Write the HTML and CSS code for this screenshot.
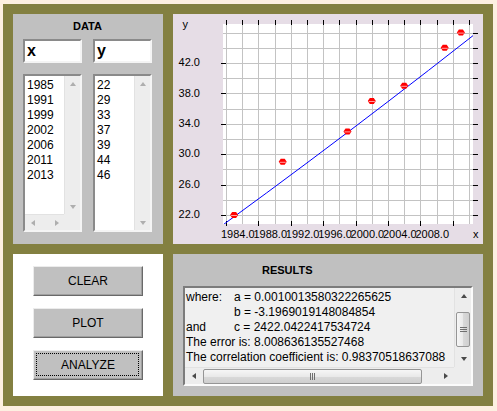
FILE: index.html
```html
<!DOCTYPE html>
<html lang="en">
<head>
    <meta charset="UTF-8">
    <title>Quadratic Regression</title>
    <link rel="stylesheet" href="styles.css">
</head>
<body>
    <div class="frame">
        <!-- Data entry -->
        <section class="panel data">
            <h2 class="data-title">DATA</h2>
            <div class="field">x</div>
            <div class="field">y</div>

            <div class="list list-x">
                <div class="items">
                    <div>1985</div>
                    <div>1991</div>
                    <div>1999</div>
                    <div>2002</div>
                    <div>2006</div>
                    <div>2011</div>
                    <div>2013</div>
                </div>
                <div class="vbar off">
                    <div class="sb-btn"><span class="arrow up"></span></div>
                    <div class="sb-btn"><span class="arrow down"></span></div>
                </div>
                <div class="hbar off">
                    <div class="sb-btn"><span class="arrow left"></span></div>
                    <div class="sb-btn"><span class="arrow right"></span></div>
                </div>
                <div class="corner"></div>
            </div>

            <div class="list list-y">
                <div class="items">
                    <div>22</div>
                    <div>29</div>
                    <div>33</div>
                    <div>37</div>
                    <div>39</div>
                    <div>44</div>
                    <div>46</div>
                </div>
                <div class="vbar off">
                    <div class="sb-btn"><span class="arrow up"></span></div>
                    <div class="sb-btn"><span class="arrow down"></span></div>
                </div>
            </div>
        </section>

        <!-- Plot -->
        <section class="panel plot">
            <svg class="chart" width="310" height="230" viewBox="0 0 310 230">
                <defs>
                    <clipPath id="plot-area"><rect x="50" y="10" width="250" height="200"/></clipPath>
                    <g id="dot">
                        <polygon points="-4,0 -2,-3 2,-3 4,0 2,3 -2,3" fill="#ff0000"/>
                        <path d="M-3 0.5h6" stroke="#ffa0a0" stroke-width="1"/>
                    </g>
                </defs>

                <rect x="50" y="10" width="250" height="200" fill="#ffffff"/>

                <path class="grid" d="M53.5 10V210M69.5 10V210M85.5 10V210M102.5 10V210M118.5 10V210M134.5 10V210M150.5 10V210M166.5 10V210M183.5 10V210M199.5 10V210M215.5 10V210M231.5 10V210M247.5 10V210M264.5 10V210M280.5 10V210M296.5 10V210
                    M50 19.5H300M50 34.5H300M50 49.5H300M50 64.5H300M50 79.5H300M50 95.5H300M50 110.5H300M50 125.5H300M50 140.5H300M50 155.5H300M50 171.5H300M50 186.5H300M50 201.5H300"/>

                <!-- top + right ticks on every grid line, left + bottom on labelled ones -->
                <path class="ticks" d="M53.5 6v5M69.5 6v5M85.5 6v5M102.5 6v5M118.5 6v5M134.5 6v5M150.5 6v5M166.5 6v5M183.5 6v5M199.5 6v5M215.5 6v5M231.5 6v5M247.5 6v5M264.5 6v5M280.5 6v5M296.5 6v5
                    M300 19.5h5M300 34.5h5M300 49.5h5M300 64.5h5M300 79.5h5M300 95.5h5M300 110.5h5M300 125.5h5M300 140.5h5M300 155.5h5M300 171.5h5M300 186.5h5M300 201.5h5
                    M48 49.5h5M48 79.5h5M48 110.5h5M48 140.5h5M48 171.5h5M48 201.5h5
                    M53.5 207v5M85.5 207v5M118.5 207v5M150.5 207v5M183.5 207v5M215.5 207v5M247.5 207v5M280.5 207v5"/>

                <g class="labels" text-anchor="end">
                    <text x="27" y="52">42.0</text>
                    <text x="27" y="82.5">38.0</text>
                    <text x="27" y="113">34.0</text>
                    <text x="27" y="143">30.0</text>
                    <text x="27" y="173.5">26.0</text>
                    <text x="27" y="204">22.0</text>
                </g>
                <g class="labels">
                    <text x="48" y="224">1984.0</text>
                    <text x="80.4" y="224">1988.0</text>
                    <text x="112.8" y="224">1992.0</text>
                    <text x="145.2" y="224">1996.0</text>
                    <text x="177.6" y="224">2000.0</text>
                    <text x="210" y="224">2004.0</text>
                    <text x="242.4" y="224">2008.0</text>
                    <text x="300" y="224">x</text>
                    <text x="9.5" y="13.5">y</text>
                </g>

                <polyline class="fit" clip-path="url(#plot-area)" points="50,210.86 93.5,178.98 134,148.9 174.5,118.44 215,87.6 255.5,56.38 300.05,21.6"/>

                <use href="#dot" x="61.1" y="201"/>
                <use href="#dot" x="109.7" y="147.8"/>
                <use href="#dot" x="174.5" y="117.4"/>
                <use href="#dot" x="198.8" y="87"/>
                <use href="#dot" x="231.2" y="71.8"/>
                <use href="#dot" x="271.7" y="33.8"/>
                <use href="#dot" x="287.9" y="18.6"/>
            </svg>
        </section>

        <!-- Buttons -->
        <section class="panel controls">
            <button class="btn">CLEAR</button>
            <button class="btn">PLOT</button>
            <button class="btn focused">ANALYZE</button>
        </section>

        <!-- Results -->
        <section class="panel results">
            <h2 class="results-title">RESULTS</h2>
            <div class="textarea">
                <div class="output">
                    <div><span class="tab">where:</span>a = 0.0010013580322265625</div>
                    <div><span class="tab"></span>b = -3.1969019148084854</div>
                    <div><span class="tab">and</span>c = 2422.0422417534724</div>
                    <div>The error is: 8.008636135527468</div>
                    <div>The correlation coefficient is: 0.98370518637088</div>
                </div>
                <div class="vbar">
                    <div class="sb-btn"><span class="arrow up"></span></div>
                    <div class="track"><div class="thumb vthumb"></div></div>
                    <div class="sb-btn"><span class="arrow down"></span></div>
                </div>
                <div class="hbar">
                    <div class="sb-btn"><span class="arrow left"></span></div>
                    <div class="track"><div class="thumb hthumb"></div></div>
                    <div class="sb-btn"><span class="arrow right"></span></div>
                </div>
                <div class="corner"></div>
            </div>
        </section>
    </div>
</body>
</html>
```

FILE: styles.css
```css
* {
    margin: 0;
    padding: 0;
    box-sizing: border-box;
}

body {
    background: #fdf0e1;
    font-family: 'Liberation Sans', Arial, sans-serif;
    font-size: 12px;
    color: #000;
}

.frame {
    margin: 4px 0 0 3px;
    width: 490px;
    height: 402px;
    padding: 10px;
    background: #838041;
    display: grid;
    grid-template-columns: 150px 310px;
    grid-template-rows: 230px 142px;
    gap: 10px;
}

/* ---------- data panel ---------- */

.data {
    background: #c0c0c0;
    display: grid;
    grid-template-columns: 59px 59px;
    grid-template-rows: 25px 35px 158px;
    column-gap: 11px;
    padding-left: 10px;
}

.data-title {
    grid-column: 1 / 3;
    text-align: center;
    font-size: 11px;
    font-weight: bold;
    line-height: 13px;
    padding-top: 6px;
}

.field {
    height: 24px;
    background: #fff;
    border: 2px solid;
    border-color: #8a8a8a #f4f4f4 #f4f4f4 #8a8a8a;
    font-size: 16px;
    font-weight: bold;
    line-height: 20px;
    padding-left: 2px;
}

.list {
    background: #fff;
    border: 2px solid;
    border-color: #8a8a8a #f4f4f4 #f4f4f4 #8a8a8a;
    display: grid;
    grid-template-columns: 1fr 16px;
    overflow: hidden;
}

.list-x {
    grid-template-rows: 1fr 16px;
}

.items {
    padding: 2px 0 0 2px;
    line-height: 15px;
}

/* ---------- scrollbars ---------- */

.vbar {
    display: flex;
    flex-direction: column;
    justify-content: space-between;
    background: #ededed;
    border-left: 1px solid #e2e2e2;
    color: #4a4a4a;
}

.hbar {
    display: flex;
    justify-content: space-between;
    background: #ededed;
    border-top: 1px solid #e2e2e2;
    color: #4a4a4a;
}

.off {
    color: #aeaeae;
}

.sb-btn {
    flex: none;
    width: 15px;
    height: 15px;
    display: flex;
    align-items: center;
    justify-content: center;
}

.corner {
    background: #ededed;
}

.arrow {
    width: 0;
    height: 0;
}

.arrow.up {
    border-left: 3.5px solid transparent;
    border-right: 3.5px solid transparent;
    border-bottom: 4px solid currentColor;
}

.arrow.down {
    border-left: 3.5px solid transparent;
    border-right: 3.5px solid transparent;
    border-top: 4px solid currentColor;
}

.arrow.left {
    border-top: 3.5px solid transparent;
    border-bottom: 3.5px solid transparent;
    border-right: 4px solid currentColor;
}

.arrow.right {
    border-top: 3.5px solid transparent;
    border-bottom: 3.5px solid transparent;
    border-left: 4px solid currentColor;
}

.track {
    flex: 1;
}

.thumb {
    border: 1px solid #959595;
    border-radius: 2px;
    display: flex;
    align-items: center;
    justify-content: center;
}

.vthumb {
    margin: 8px 1px 0 1px;
    height: 35px;
    background: linear-gradient(90deg, #f6f6f6, #e9e9e9 50%, #d9d9d9 51%, #cfcfcf);
}

.vthumb::after {
    content: '';
    width: 7px;
    height: 5px;
    background: linear-gradient(#6f6f6f 1px, transparent 1px) 0 0 / 7px 2px;
}

.hbar .track {
    padding: 0 0 0 1px;
    display: flex;
    align-items: center;
}

.hthumb {
    width: 219px;
    height: 15px;
    background: linear-gradient(#f6f6f6, #e9e9e9 50%, #d9d9d9 51%, #cfcfcf);
}

.hthumb::after {
    content: '';
    width: 5px;
    height: 7px;
    background: linear-gradient(90deg, #6f6f6f 1px, transparent 1px) 0 0 / 2px 7px;
}

/* ---------- plot ---------- */

.plot {
    background: #e6dde6;
}

.chart {
    display: block;
}

.grid {
    stroke: #c3c3c3;
    stroke-width: 1;
    fill: none;
}

.ticks {
    stroke: #000;
    stroke-width: 1;
    fill: none;
}

.labels {
    font-family: 'Liberation Sans', Arial, sans-serif;
    font-size: 11px;
    fill: #000;
}

.fit {
    fill: none;
    stroke: #0000ff;
    stroke-width: 1;
}

/* ---------- buttons ---------- */

.controls {
    background: #fff;
    display: flex;
    flex-direction: column;
    align-items: center;
    gap: 12px;
    padding-top: 12px;
}

.btn {
    position: relative;
    width: 110px;
    height: 30px;
    background: #c0c0c0;
    border: 1px solid;
    border-color: #ececec #696969 #696969 #ececec;
    box-shadow: inset -1px -1px 0 #a0a0a0;
    font-family: 'Liberation Sans', Arial, sans-serif;
    font-size: 12px;
    color: #000;
}

.btn.focused::after {
    content: '';
    position: absolute;
    inset: 2px 3px 3px 2px;
    border: 1px dotted #000;
}

/* ---------- results ---------- */

.results {
    background: #c0c0c0;
}

.results-title {
    height: 32px;
    padding: 10px 0 0 89px;
    font-size: 11px;
    font-weight: bold;
    line-height: 13px;
}

.textarea {
    margin-left: 10px;
    width: 290px;
    height: 100px;
    background: #f0f0f0;
    border: 2px solid;
    border-color: #7c7c7c #fbfbfb #fbfbfb #7c7c7c;
    display: grid;
    grid-template-columns: 1fr 17px;
    grid-template-rows: 1fr 17px;
    overflow: hidden;
}

.textarea .sb-btn {
    width: 17px;
    height: 16px;
}

.textarea .hbar .sb-btn {
    width: 17px;
    height: 16px;
}

.output {
    padding: 2px 0 0 1px;
    line-height: 15px;
    white-space: nowrap;
    overflow: hidden;
}

.tab {
    display: inline-block;
    width: 48px;
}
```
